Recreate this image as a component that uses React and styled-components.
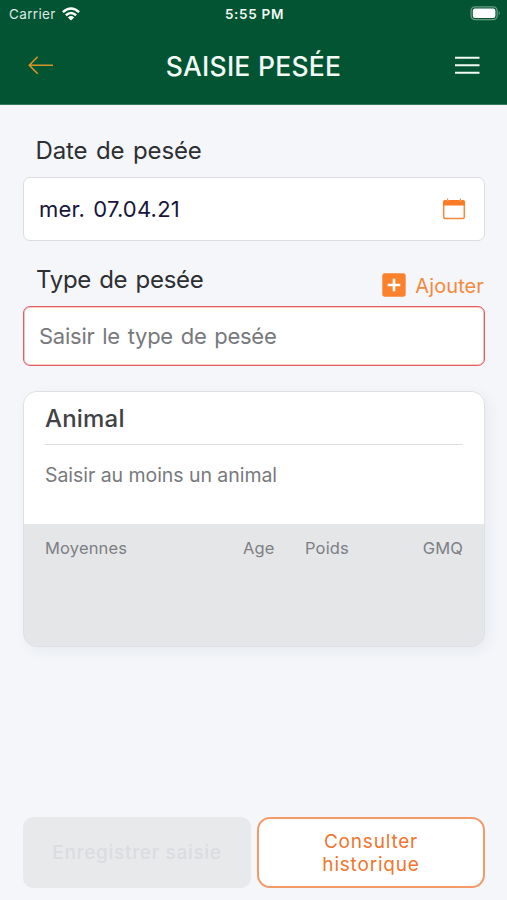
import React from "react";
import styled, { createGlobalStyle } from "styled-components";

const Global = createGlobalStyle`
  * { box-sizing: border-box; }
  html, body { margin: 0; padding: 0; }
  body { background: #f4f6fa; font-family: Inter, "Liberation Sans", sans-serif; }
  button { font-family: inherit; margin: 0; }
  svg { display: block; }
`;

const Screen = styled.div`
  display: flex;
  flex-direction: column;
  width: 507px;
  height: 900px;
  overflow: hidden;
  background: #f4f6fa;
`;

const Header = styled.header`
  height: 105px;
  flex: none;
  background: #035433;
  border-bottom: 1px solid #3c7a60;
  color: #f2fbf6;
`;

const StatusBar = styled.div`
  display: grid;
  grid-template-columns: 1fr auto 1fr;
  align-items: center;
  height: 27px;
  padding: 0 6px 0 9px;
  line-height: 16px;
`;

const Carrier = styled.div`
  display: flex;
  align-items: center;
  gap: 6px;
  font-size: 13.5px;
  letter-spacing: 0.35px;
  color: #dcebe4;
`;

const Clock = styled.div`
  font-size: 13.5px;
  font-weight: 600;
  letter-spacing: 0.7px;
  margin-right: 1px;
`;

const BatterySlot = styled.div`
  justify-self: end;
`;

const NavBar = styled.div`
  display: grid;
  grid-template-columns: 54px 1fr 54px;
  align-items: center;
  height: 76px;
`;

const Title = styled.h1`
  margin: 0;
  padding-top: 2px;
  text-align: center;
  font-size: 26.5px;
  line-height: 32px;
  font-weight: 500;
  letter-spacing: 0.25px;
`;

const IconButton = styled.button`
  display: flex;
  justify-content: ${(p) => p.$align};
  padding: ${(p) => p.$pad};
  border: 0;
  background: none;
`;

const Content = styled.main`
  display: flex;
  flex-direction: column;
  flex: 1;
  padding: 29px 22px 12px 23px;
`;

const LabelRow = styled.div`
  display: flex;
  justify-content: space-between;
  align-items: flex-start;
  height: ${(p) => p.$height}px;
  padding: ${(p) => p.$top || 0}px 0 0 ${(p) => p.$left || 13}px;
`;

const Label = styled.div`
  font-size: 24px;
  line-height: 32px;
  letter-spacing: ${(p) => p.$spacing};
  word-spacing: 1.8px;
  color: #2d2f33;
  white-space: nowrap;
`;

const Field = styled.div`
  display: flex;
  align-items: center;
  justify-content: space-between;
  flex: none;
  height: ${(p) => p.$height}px;
  padding: 0 18px 0 15px;
  border: 1px solid ${(p) => (p.$error ? "#e45c5b" : "#dcdde0")};
  border-radius: 7px;
  box-shadow: ${(p) => (p.$error ? "inset 0 0 0 0.6px #ee9b9a" : "none")};
  background: #fff;
  color: ${(p) => (p.$placeholder ? "#77797d" : "#17163a")};
  font-size: 22px;
  line-height: 28px;
  letter-spacing: ${(p) => p.$spacing};
  word-spacing: 1.8px;
  white-space: nowrap;
`;

const AddButton = styled.button`
  display: flex;
  align-items: center;
  gap: 9px;
  height: 26px;
  margin-top: 8px;
  padding: 0 1px 0 0;
  border: 0;
  background: none;
  color: #f5893b;
  font-size: 20px;
  line-height: 26px;
  letter-spacing: 0.1px;
`;

const AddText = styled.span`
  padding-top: 2px;
`;

const Card = styled.section`
  flex: none;
  height: 256px;
  margin-top: 25px;
  border: 1px solid #dfe0e3;
  border-radius: 14px;
  background: #e4e6e8;
  overflow: hidden;
  box-shadow: 4px 4px 14px rgba(40, 45, 60, 0.06);
`;

const CardBody = styled.div`
  height: 132px;
  padding: 11px 21px 0;
  background: #fff;
`;

const CardTitle = styled.h2`
  margin: 0;
  height: 42px;
  border-bottom: 1px solid #dcdddf;
  color: #414245;
  font-size: 24px;
  line-height: 32px;
  font-weight: 500;
  letter-spacing: 0.2px;
`;

const EmptyText = styled.p`
  margin: 17px 0 0;
  color: #77797d;
  font-size: 19.5px;
  line-height: 26px;
  letter-spacing: -0.05px;
`;

const Averages = styled.div`
  display: grid;
  grid-template-columns: 198px 62px 1fr auto;
  padding: 13px 21px;
  color: #7d7f84;
  font-size: 16.5px;
  line-height: 22px;
  letter-spacing: 0.15px;
`;

const Actions = styled.footer`
  display: grid;
  grid-template-columns: 1fr 1fr;
  gap: 6px;
  height: 71px;
  margin-top: auto;
`;

const ActionButton = styled.button`
  padding: 0 ${(p) => (p.$muted ? 10 : 50)}px;
  border-radius: ${(p) => (p.$muted ? 10 : 13)}px;
  border: ${(p) => (p.$muted ? "0" : "2px solid #f39a68")};
  background: ${(p) => (p.$muted ? "#e8e9eb" : "#fff")};
  color: ${(p) => (p.$muted ? "#dadce1" : "#ee762f")};
  font-size: 19px;
  line-height: 23px;
  font-weight: ${(p) => (p.$muted ? 500 : 400)};
  letter-spacing: ${(p) => (p.$muted ? 0.7 : 0.8)}px;
`;

const WifiIcon = () => (
  <svg width="18" height="14" viewBox="0 0 18 14" fill="none" stroke="#fff" strokeWidth="2.5">
    <path d="M.9 5.1Q9-2.1 17.1 5.1" />
    <path d="M3.9 8.3Q9 3.7 14.1 8.3" />
    <path d="M9 13.5 5.9 10.4Q9 7.8 12.1 10.4Z" fill="#fff" stroke="none" />
  </svg>
);

const BatteryIcon = () => (
  <svg width="31" height="15" viewBox="0 0 31 15">
    <rect x="1.1" y=".8" width="26" height="12.8" rx="3.8" fill="none" stroke="#6b9b84" strokeWidth="1.3" />
    <rect x="2.8" y="2.5" width="22.6" height="9.4" rx="2.2" fill="#fff" />
    <path d="M28.7 5Q30.8 7.2 28.7 9.4Z" fill="#6b9b84" />
  </svg>
);

const BackIcon = () => (
  <svg width="26" height="20" viewBox="0 0 26 20" fill="none" stroke="#d69428" strokeWidth="1.6">
    <path d="M25 10.3H1.5M9.7 1.8 1.3 10.3l8.4 8.5" />
  </svg>
);

const MenuIcon = () => (
  <svg width="26" height="20" viewBox="0 0 26 20" stroke="#f2fbf6" strokeWidth="2">
    <path d="M1 2.8h24.5M1 10.3h24.5M1 17.8h24.5" />
  </svg>
);

const CalendarIcon = () => (
  <svg width="24" height="22" viewBox="0 0 24 22">
    <rect x="1.7" y="2.9" width="20.6" height="17.6" rx="1.8" fill="#fff" stroke="#f8893a" strokeWidth="1.5" />
    <path d="M1 7.6V4Q1 2 3 2h1.2l1.2 1.8L7 2h10l1.6 1.8L19.8 2H21q2 0 2 2v3.6Z" fill="#fa7b25" />
    <path d="M5.6.6v1.6M18.4.6v1.6" stroke="#f8893a" strokeWidth="1.2" />
  </svg>
);

const PlusIcon = () => (
  <svg width="24" height="24" viewBox="0 0 24 24">
    <rect x=".3" y=".3" width="23.4" height="23.4" rx="2.6" fill="#fb812d" />
    <path d="M12 5.7v12.6M5.7 12h12.6" stroke="#fff" strokeWidth="2.6" />
  </svg>
);

export default function App() {
  return (
    <>
      <Global />
      <Screen>
        <Header>
          <StatusBar>
            <Carrier>
              <span>Carrier</span>
              <WifiIcon />
            </Carrier>
            <Clock>5:55 PM</Clock>
            <BatterySlot>
              <BatteryIcon />
            </BatterySlot>
          </StatusBar>
          <NavBar>
            <IconButton $align="flex-end" $pad="0" aria-label="Retour">
              <BackIcon />
            </IconButton>
            <Title>SAISIE PESÉE</Title>
            <IconButton $align="flex-start" $pad="0 0 0 1px" aria-label="Menu">
              <MenuIcon />
            </IconButton>
          </NavBar>
        </Header>
        <Content>
          <LabelRow $height={43} $top={1} $left={12.5}>
            <Label $spacing="-0.1px">Date de pesée</Label>
          </LabelRow>
          <Field $height={64} $spacing="0.2px">
            <span>mer. 07.04.21</span>
            <CalendarIcon />
          </Field>
          <LabelRow $height={65} $top={23}>
            <Label $spacing="-0.3px">Type de pesée</Label>
            <AddButton>
              <PlusIcon />
              <AddText>Ajouter</AddText>
            </AddButton>
          </LabelRow>
          <Field $height={60} $error $placeholder $spacing="-0.25px">
            Saisir le type de pesée
          </Field>
          <Card>
            <CardBody>
              <CardTitle>Animal</CardTitle>
              <EmptyText>Saisir au moins un animal</EmptyText>
            </CardBody>
            <Averages>
              <span>Moyennes</span>
              <span>Age</span>
              <span>Poids</span>
              <span>GMQ</span>
            </Averages>
          </Card>
          <Actions>
            <ActionButton $muted disabled>
              Enregistrer saisie
            </ActionButton>
            <ActionButton>Consulter historique</ActionButton>
          </Actions>
        </Content>
      </Screen>
    </>
  );
}
